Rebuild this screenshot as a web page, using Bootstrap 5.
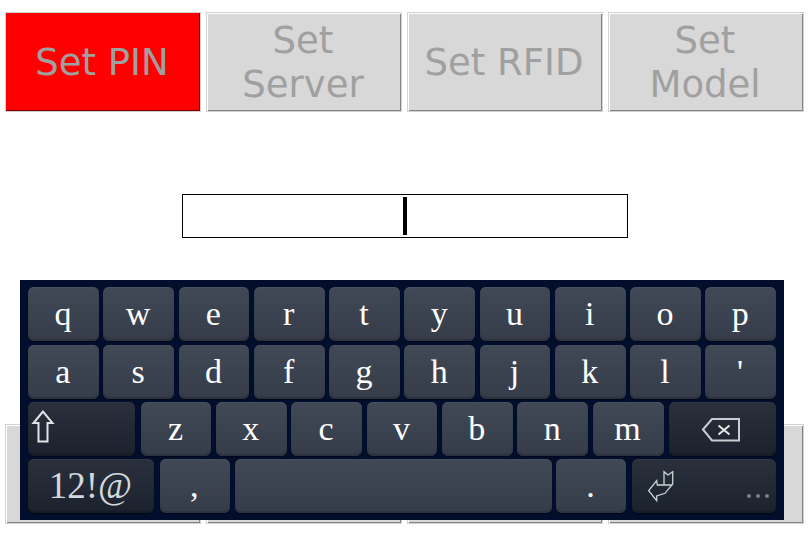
<!DOCTYPE html>
<html>
<head>
  <title>Setup</title>
  <link href="https://cdn.jsdelivr.net/npm/bootstrap@5.3.0/dist/css/bootstrap.min.css" rel="stylesheet">
  <style>
    html, body { height: 540px; overflow: hidden; background: #fff; }
    .page-wrap { height: 540px; padding: 12px 4px 16px 5px; }
    .set-row { gap: 5px; }
    .set-btn {
      flex: 1 1 0;
      height: 100px;
      padding: 2px 13px 0 11px;
      font-family: "DejaVu Sans", sans-serif;
      font-size: 37px;
      line-height: 44px;
      color: #a0a0a0;
      background: #d8d8d8;
      border: 1px solid #d2d2d2;
      border-radius: 0;
      box-shadow: inset 1px 1px 0 #fff, inset -1px -1px 0 #858585;
    }
    .set-btn.is-active { background: #f00; box-shadow: inset -1px -1px 0 #7a0000; }
    .pin-box { width: 446px; height: 44px; border: 1px solid #000; margin-top: 82px; }
    .pin-caret { width: 4px; height: 38px; background: #000; margin-left: 220px; }
    .kbd-panel {
      position: absolute; left: 20px; top: 280px; width: 764px; height: 240px;
      padding: 7.4px 8px 0 8px; background: #010e2c;
      display: flex; flex-direction: column; gap: 3.3px;
    }
    .kbd-row { display: flex; gap: 4.5px; height: 54px; }
    .kbd-key {
      flex: 1 1 0; min-width: 0; border-radius: 6px; color: #fff; padding-right: 1px;
      background: linear-gradient(180deg, #414956 0%, #363c49 100%);
      box-shadow: inset 0 -2px 1px #2c323e, inset 0 1px 0 #484f5d, 0 1px 1px #01081a;
      font-family: "Liberation Serif", serif; font-size: 34px; line-height: 54px; text-align: center;
    }
    .kbd-key.is-fn {
      background: linear-gradient(180deg, #2a303c 0%, #1c222d 100%);
      box-shadow: inset 0 -2px 1px #161b26, inset 0 1px 0 #313744, 0 1px 1px #01081a;
      color: #d4d8dc;
    }
    .k-shift { flex: 0 0 107px; margin-right: 1px; }
    .k-back { flex: 0 0 107px; margin-left: 1px; }
    .k-nums { flex: 0 0 126px; margin-right: 1px; font-size: 37px; }
    .k-comma { flex: 0 0 70.5px; }
    .k-dot { flex: 0 0 70px; }
    .k-enter { flex: 0 0 144px; margin-left: 1.5px; position: relative; }
    .k-space { flex: 1 1 0; }
    .more-dots { position: absolute; right: 7px; bottom: 15px; display: flex; gap: 5px; }
    .more-dots i { width: 4px; height: 4px; border-radius: 50%; background: #7b7f87; }
    .key-svg { display: block; }
  </style>
</head>
<body>
  <div class="page-wrap d-flex flex-column">
    <div class="d-flex set-row">
      <button class="btn set-btn is-active" type="button">Set PIN</button>
      <button class="btn set-btn" type="button">Set Server</button>
      <button class="btn set-btn" type="button">Set RFID</button>
      <button class="btn set-btn" type="button">Set Model</button>
    </div>
    <div class="d-flex justify-content-center">
      <div class="pin-box d-flex align-items-center"><div class="pin-caret"></div></div>
    </div>
    <div class="d-flex set-row mt-auto">
      <button class="btn set-btn" type="button"></button>
      <button class="btn set-btn" type="button"></button>
      <button class="btn set-btn" type="button"></button>
      <button class="btn set-btn" type="button"></button>
    </div>
  </div>

  <div class="kbd-panel">
    <div class="kbd-row">
      <div class="kbd-key">q</div><div class="kbd-key">w</div><div class="kbd-key">e</div><div class="kbd-key">r</div><div class="kbd-key">t</div><div class="kbd-key">y</div><div class="kbd-key">u</div><div class="kbd-key">i</div><div class="kbd-key">o</div><div class="kbd-key">p</div>
    </div>
    <div class="kbd-row">
      <div class="kbd-key">a</div><div class="kbd-key">s</div><div class="kbd-key">d</div><div class="kbd-key">f</div><div class="kbd-key">g</div><div class="kbd-key">h</div><div class="kbd-key">j</div><div class="kbd-key">k</div><div class="kbd-key">l</div><div class="kbd-key">'</div>
    </div>
    <div class="kbd-row">
      <div class="kbd-key is-fn k-shift">
        <svg class="key-svg" width="107" height="54" viewBox="0 0 107 54"><path d="M15 9.5 L5.5 21 H10.5 V39.5 H19.5 V21 H24.5 Z" fill="none" stroke="#dfe3e6" stroke-width="2"/></svg>
      </div>
      <div class="kbd-key">z</div><div class="kbd-key">x</div><div class="kbd-key">c</div><div class="kbd-key">v</div><div class="kbd-key">b</div><div class="kbd-key">n</div><div class="kbd-key">m</div>
      <div class="kbd-key is-fn k-back">
        <svg class="key-svg" width="107" height="54" viewBox="0 0 107 54"><path d="M34 27.5 L43 17 H70 V38.5 H43 Z" fill="none" stroke="#c9cdd1" stroke-width="2"/><path d="M49.5 23.5 L60.5 32.5 M60.5 23.5 L49.5 32.5" stroke="#e4e7ea" stroke-width="2"/></svg>
      </div>
    </div>
    <div class="kbd-row">
      <div class="kbd-key is-fn k-nums">12!@</div>
      <div class="kbd-key k-comma">,</div>
      <div class="kbd-key k-space"></div>
      <div class="kbd-key k-dot">.</div>
      <div class="kbd-key is-fn k-enter">
        <svg class="key-svg" width="144" height="54" viewBox="0 0 144 54"><path d="M16.7 31.7 L24.7 21.7 L25.3 26 H32 V12.7 L36 16 L40.7 12.7 V25 L33 34.3 L24.7 37 V41.7 Z M32 26 H40.7" fill="none" stroke="#c9d6d4" stroke-width="1.3"/></svg>
        <div class="more-dots"><i></i><i></i><i></i></div>
      </div>
    </div>
  </div>
</body>
</html>
